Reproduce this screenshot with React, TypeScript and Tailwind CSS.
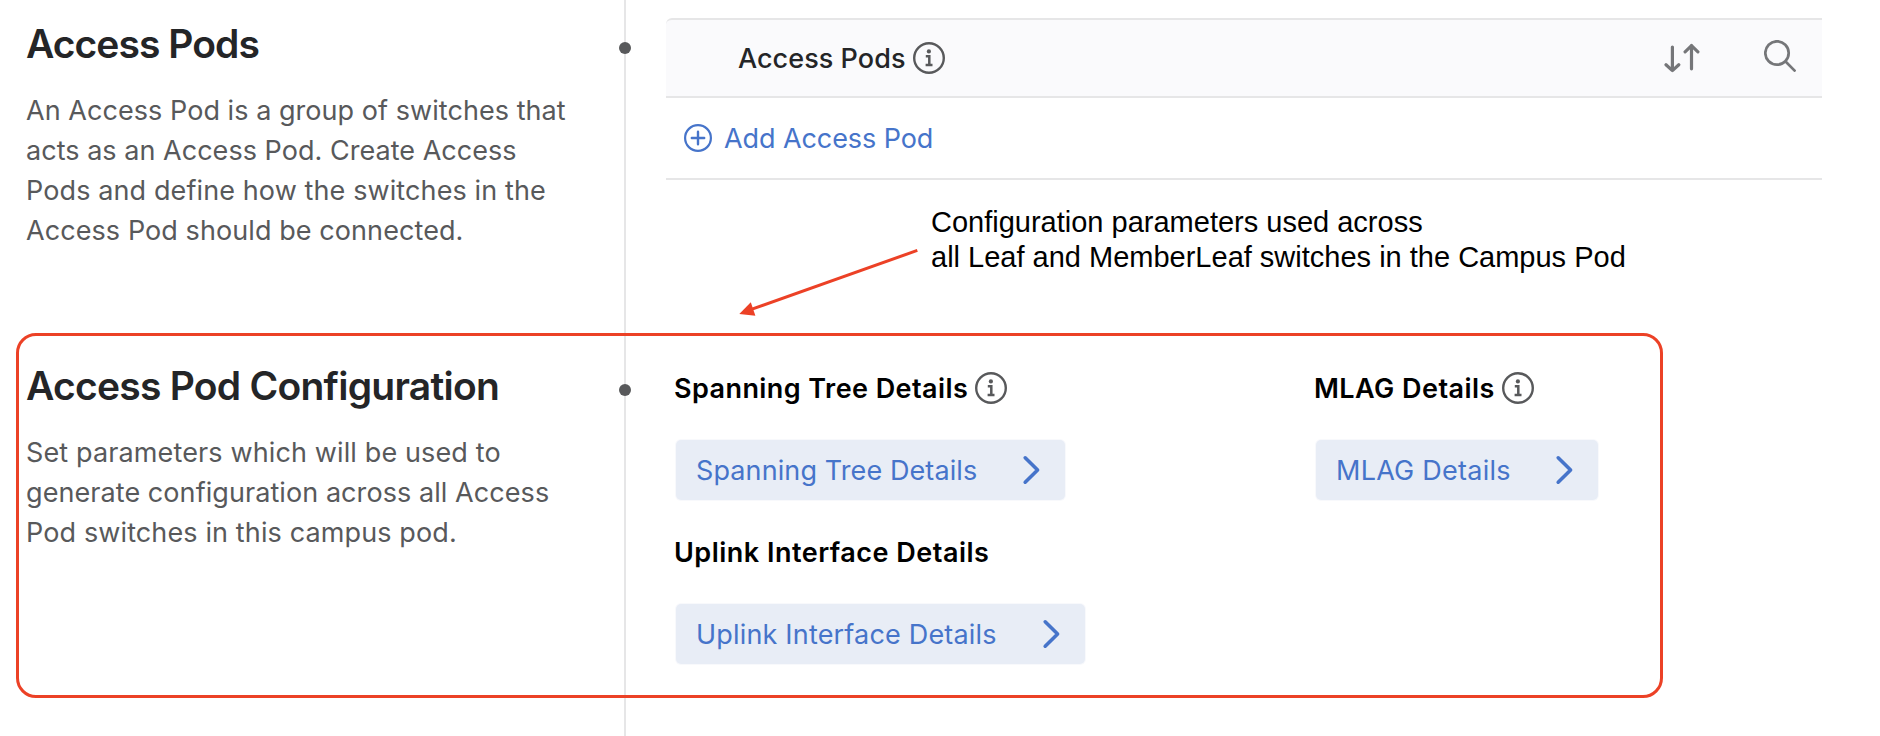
import type { ReactNode } from "react";

function InfoIcon() {
  return (
    <svg className="size-8 shrink-0" viewBox="0 0 32 32" fill="none">
      <circle cx="16" cy="16" r="14.8" stroke="#58595b" strokeWidth="2.4" />
      <circle cx="15.9" cy="9.4" r="2.1" fill="#58595b" />
      <path d="M12.8 14.2h3.5v8.6M12.6 23h6.9" stroke="#58595b" strokeWidth="2.5" />
    </svg>
  );
}

function PlusCircleIcon() {
  return (
    <svg className="size-7 shrink-0" viewBox="0 0 28 28" fill="none" stroke="#4674ca" strokeWidth="2.2">
      <circle cx="14" cy="14" r="12.9" />
      <path d="M14 7.8v12.4M7.8 14h12.4" strokeLinecap="round" strokeWidth="2.4" />
    </svg>
  );
}

function SortIcon() {
  return (
    <svg className="h-8 w-9" viewBox="0 0 36 32" fill="none" stroke="#757679" strokeWidth="3.2" strokeLinecap="round" strokeLinejoin="round">
      <path d="M8.4 5v23.5M2 22.8l6.4 5.8 6.4-5.8" />
      <path d="M27.5 26.8V3.4M21.1 9.8l6.4-6.2 6.4 6.2" />
    </svg>
  );
}

function SearchIcon() {
  return (
    <svg className="size-8" viewBox="0 0 32 32" fill="none" stroke="#757679" strokeWidth="2.7" strokeLinecap="round">
      <circle cx="13" cy="13" r="11.7" />
      <path d="M21.8 21.8l8.8 8.8" />
    </svg>
  );
}

function Section({ title, titleClass, lines, children }: { title: string; titleClass: string; lines: [string, string][]; children: ReactNode }) {
  return (
    <section className="flex h-[342px] shrink-0 last-of-type:h-[394px]">
      <div className="w-[624px] shrink-0 pt-5 pl-[26px]">
        <h2 className={`text-[39px] leading-[48px] font-semibold text-[#242527] ${titleClass}`}>{title}</h2>
        <p className="mt-[23px] text-[27px] leading-10 text-[#58595b]">
          {lines.map(([text, tracking]) => (
            <span key={text} className={`block ${tracking}`}>{text}</span>
          ))}
        </p>
      </div>
      <div className="relative w-0.5 shrink-0 bg-[#e6e6e7]">
        <span className="absolute top-[41.5px] -left-[5px] size-3 rounded-full bg-[#58595b]" />
      </div>
      {children}
    </section>
  );
}

function Detail({ label, labelClass, buttonClass, info }: { label: string; labelClass: string; buttonClass: string; info?: boolean }) {
  return (
    <div>
      <h3 className="flex h-8 items-center gap-[7px] text-[27px] leading-8 font-semibold text-black">
        <span className={`pt-0.5 ${labelClass}`}>{label}</span>
        {info && <InfoIcon />}
      </h3>
      <button className={`mt-9 ml-0.5 flex h-[60px] items-center justify-between rounded-[5px] bg-[#e8edf6] pr-6 pl-5 text-[27px] leading-8 text-[#4674ca] shadow-[0_0_0_1px_#f8f9fc] ${buttonClass}`}>
        <span className="pt-0.5">{label}</span>
        <svg className="h-8 w-5" viewBox="0 0 20 32" fill="none" stroke="#4674ca" strokeWidth="3.6" strokeLinecap="round" strokeLinejoin="round">
          <path d="M4.2 3.8L16.6 16 4.2 28.2" />
        </svg>
      </button>
    </div>
  );
}

export default function App() {
  return (
    <main className="relative flex h-[736px] w-[1880px] flex-col overflow-hidden bg-white font-['Inter',sans-serif] whitespace-nowrap">
      <Section
        title="Access Pods"
        titleClass="tracking-[-0.95px]"
        lines={[
          ["An Access Pod is a group of switches that", "tracking-[0.05px]"],
          ["acts as an Access Pod. Create Access", "tracking-[0.03px]"],
          ["Pods and define how the switches in the", "tracking-[0.11px]"],
          ["Access Pod should be connected.", "tracking-[0.08px]"],
        ]}
      >
        <div className="ml-10 w-[1156px] pt-[18px]">
          <div className="flex h-20 items-center rounded-tl-md border-y-2 border-[#e6e6e7] bg-[#fafafc] pr-[26px] pl-[72px]">
            <h3 className="pt-0.5 text-[27px] leading-8 font-medium tracking-[0.05px] text-[#242527]">Access Pods</h3>
            <div className="ml-2 flex"><InfoIcon /></div>
            <div className="ml-auto flex items-center gap-16">
              <SortIcon />
              <div className="-mt-1 flex"><SearchIcon /></div>
            </div>
          </div>
          <button className="flex h-[82px] w-full items-center gap-3 border-b-2 border-[#e6e6e7] pl-[18px] text-[27px] leading-8 tracking-[-0.08px] text-[#4674ca]">
            <PlusCircleIcon />
            <span className="pt-0.5">Add Access Pod</span>
          </button>
        </div>
      </Section>

      <Section
        title="Access Pod Configuration"
        titleClass="tracking-[-0.75px]"
        lines={[
          ["Set parameters which will be used to", "tracking-[0.13px]"],
          ["generate configuration across all Access", "tracking-[0.07px]"],
          ["Pod switches in this campus pod.", "tracking-[0.12px]"],
        ]}
      >
        <div className="grid grid-cols-[640px_auto] content-start gap-y-9 pt-[30px] pl-12">
          <Detail label="Spanning Tree Details" labelClass="tracking-[0.43px]" buttonClass="w-[389px] tracking-[0.1px]" info />
          <Detail label="MLAG Details" labelClass="tracking-[0.45px]" buttonClass="w-[282px] tracking-[0.25px]" info />
          <Detail label="Uplink Interface Details" labelClass="tracking-[0.49px]" buttonClass="w-[409px] tracking-[0.18px]" />
        </div>
      </Section>

      <p className="absolute top-[205px] left-[931px] font-['Liberation_Sans',sans-serif] text-[29px] leading-[35px] text-black">
        Configuration parameters used across
        <br />
        all Leaf and MemberLeaf switches in the Campus Pod
      </p>
      <svg className="absolute top-[244px] left-[734px]" width="190" height="76" viewBox="734 244 190 76">
        <path d="M917.3 250.4L752 309.2" stroke="#ec4126" strokeWidth="3" />
        <path d="M739.3 313.9L750.8 302.2L755.4 315.8Z" fill="#ec4126" />
      </svg>
      <div className="pointer-events-none absolute top-[332.5px] left-[15.5px] h-[365px] w-[1647px] rounded-[20px] border-3 border-[#ec4126]" />
    </main>
  );
}
